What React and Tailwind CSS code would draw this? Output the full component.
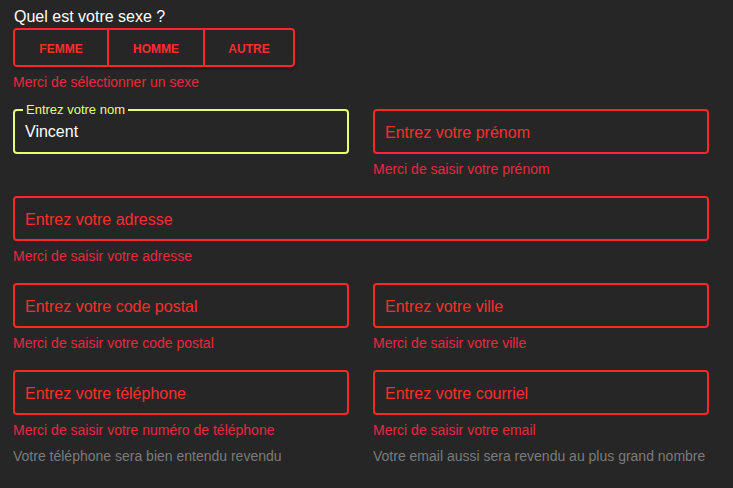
import React from "react";

const font = { fontFamily: '"Liberation Sans", Arial, sans-serif' };

function ErrorText({ children }) {
  return <div className="mt-[7px] text-[14px] leading-[16px] text-[#e8293f]">{children}</div>;
}

function Helper({ children }) {
  return <div className="mt-[10px] text-[14px] leading-[16px] text-[#7b7b7b]">{children}</div>;
}

function RedField({ placeholder }) {
  return (
    <div className="h-[45px] rounded-[4px] border-2 border-[#ff2828] flex items-center px-[10px]">
      <span className="text-[16px] leading-[18px] text-[#ff2d2d] mt-[3px]">{placeholder}</span>
    </div>
  );
}

export default function App() {
  return (
    <div className="min-h-screen w-full bg-[#262626] px-[13px] pt-[8px]" style={font}>
      <div className="text-[16px] leading-[18px] text-white pl-[1px]">Quel est votre sexe ?</div>
      <div className="mt-[2px] flex w-[282px] h-[39px] rounded-[4px] border-2 border-[#ff2828] shadow-[0_2px_3px_rgba(0,0,0,0.35)]">
        <div className="w-[92px] pt-[2px] flex items-center justify-center text-[12px] font-bold text-[#ff2d2d]">FEMME</div>
        <div className="w-[96px] pt-[2px] border-l-2 border-[#ff2828] flex items-center justify-center text-[12px] font-bold text-[#ff2d2d]">HOMME</div>
        <div className="flex-1 pt-[2px] border-l-2 border-[#ff2828] flex items-center justify-center text-[12px] font-bold text-[#ff2d2d]">AUTRE</div>
      </div>
      <div className="mt-[7px] text-[14px] leading-[16px] text-[#e8293f]">Merci de sélectionner un sexe</div>

      <div className="mt-[19px] grid w-[696px] grid-cols-2 gap-x-[24px] gap-y-[19px]">
        <div>
          <div className="relative h-[45px] rounded-[4px] border-2 border-[#e6ff6c] flex items-center px-[10px]">
            <span className="absolute left-[8px] top-[-9px] bg-[#262626] px-[3px] text-[13px] leading-[15px] text-[#e6ff6c]">
              Entrez votre nom
            </span>
            <span className="text-[16px] leading-[18px] text-white mt-[1px]">Vincent</span>
          </div>
        </div>
        <div>
          <RedField placeholder="Entrez votre prénom" />
          <ErrorText>Merci de saisir votre prénom</ErrorText>
        </div>

        <div className="col-span-2">
          <RedField placeholder="Entrez votre adresse" />
          <ErrorText>Merci de saisir votre adresse</ErrorText>
        </div>

        <div>
          <RedField placeholder="Entrez votre code postal" />
          <ErrorText>Merci de saisir votre code postal</ErrorText>
        </div>
        <div>
          <RedField placeholder="Entrez votre ville" />
          <ErrorText>Merci de saisir votre ville</ErrorText>
        </div>

        <div>
          <RedField placeholder="Entrez votre téléphone" />
          <ErrorText>Merci de saisir votre numéro de téléphone</ErrorText>
          <Helper>Votre téléphone sera bien entendu revendu</Helper>
        </div>
        <div>
          <RedField placeholder="Entrez votre courriel" />
          <ErrorText>Merci de saisir votre email</ErrorText>
          <Helper>Votre email aussi sera revendu au plus grand nombre</Helper>
        </div>
      </div>
    </div>
  );
}
